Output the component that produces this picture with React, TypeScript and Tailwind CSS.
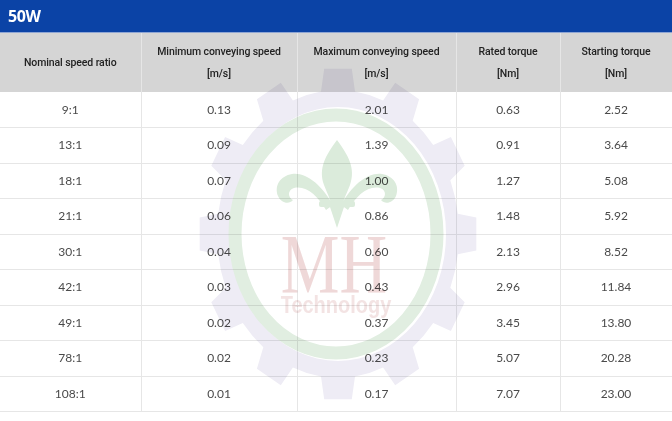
import React from 'react';

const rows = [
  ['9:1', '0.13', '2.01', '0.63', '2.52'],
  ['13:1', '0.09', '1.39', '0.91', '3.64'],
  ['18:1', '0.07', '1.00', '1.27', '5.08'],
  ['21:1', '0.06', '0.86', '1.48', '5.92'],
  ['30:1', '0.04', '0.60', '2.13', '8.52'],
  ['42:1', '0.03', '0.43', '2.96', '11.84'],
  ['49:1', '0.02', '0.37', '3.45', '13.80'],
  ['78:1', '0.02', '0.23', '5.07', '20.28'],
  ['108:1', '0.01', '0.17', '7.07', '23.00'],
];

const headers = [
  ['Nominal speed ratio'],
  ['Minimum conveying speed', '[m/s]'],
  ['Maximum conveying speed', '[m/s]'],
  ['Rated torque', '[Nm]'],
  ['Starting torque', '[Nm]'],
];

const widths = ['w-[141px]', 'w-[156px]', 'w-[159px]', 'w-[104px]', 'w-[112px]'];

// gear outline for the watermark, 12 teeth on an ellipse
const gearPath = () => {
  const cx = 338, cy = 234;
  const n = 12;
  const step = (Math.PI * 2) / n;
  const inner = [121, 144];
  const outer = [139, 166];
  const pts: string[] = [];
  const pt = (a: number, r: number[]) =>
    `${(cx + r[0] * Math.sin(a)).toFixed(1)},${(cy - r[1] * Math.cos(a)).toFixed(1)}`;
  for (let i = 0; i < n; i++) {
    const a = i * step;
    pts.push(pt(a - step * 0.27, inner));
    pts.push(pt(a - step * 0.19, outer));
    pts.push(pt(a + step * 0.19, outer));
    pts.push(pt(a + step * 0.27, inner));
    pts.push(pt(a + step * 0.5, inner));
  }
  const hx = 108, hy = 127;
  const hole = `M${cx - hx},${cy} a${hx},${hy} 0 1,0 ${hx * 2},0 a${hx},${hy} 0 1,0 ${-hx * 2},0 Z`;
  return `M${pts.join(' L')} Z ${hole}`;
};

const Watermark = () => (
  <svg
    className="pointer-events-none absolute left-0 top-0 mix-blend-multiply"
    width="672"
    height="421"
    viewBox="0 0 672 421"
  >
    <path d={gearPath()} fill="#eeecf5" fillRule="evenodd" />
    <ellipse cx="336" cy="234" rx="101" ry="119" fill="none" stroke="#e1eee1" strokeWidth="13" />
    {/* fleur-de-lis */}
    <g fill="#dbebdb">
      <path d="M337,140 C326,155 318,168 324,185 C327,193 330,198 331,204 L343,204 C344,198 347,193 350,185 C356,168 348,155 337,140 Z" />
      <path d="M333,205 C322,185 306,172 292,174 C280,176 274,186 278,196 C281,203 289,205 293,200 C288,198 287,190 294,188 C306,185 318,196 326,210 Z" />
      <path d="M341,205 C352,185 368,172 382,174 C394,176 400,186 396,196 C393,203 385,205 381,200 C386,198 387,190 380,188 C368,185 356,196 348,210 Z" />
      <rect x="319" y="201" width="36" height="6" rx="2" />
      <path d="M330,207 L337,228 L344,207 Z" />
    </g>
    <text
      x="0"
      y="0"
      textAnchor="middle"
      fontFamily="'Liberation Serif', serif"
      fontSize="66"
      fill="#efd8d8"
      transform="translate(334 293) scale(1 1.27)"
    >
      MH
    </text>
    <text
      x="0"
      y="0"
      textAnchor="middle"
      fontFamily="'Liberation Sans', sans-serif"
      fontSize="20"
      fontWeight="bold"
      fill="#f3e3e3"
      transform="translate(336 313) scale(1 1.2)"
    >
      Technology
    </text>
  </svg>
);

export default function App() {
  return (
    <div className="relative w-[672px] h-[421px] overflow-hidden bg-white font-['Roboto',sans-serif]">
      <div className="h-[33px] bg-[#0b43a6] border-b border-[#8fa6d4] flex items-center px-2">
        <span className="text-white text-[16px] font-bold font-['Open_Sans',sans-serif] tracking-tight">50W</span>
      </div>
      <table className="w-[672px] table-fixed border-collapse">
        <thead>
          <tr className="h-[59px] bg-[#d5d5d5]">
            {headers.map((h, i) => (
              <th
                key={i}
                className={`${widths[i]} border-x border-[#e6e6e6] first:border-l-0 text-[10.5px] font-medium text-[#222] leading-[22px] tracking-[-0.1px]`}
              >
                {h.map((line, j) => (
                  <div key={j}>{line}</div>
                ))}
              </th>
            ))}
          </tr>
        </thead>
        <tbody>
          {rows.map((r, i) => (
            <tr key={i} className="h-[35.5px] border-b border-[#e6e6e6]">
              {r.map((c, j) => (
                <td
                  key={j}
                  className="border-x border-[#e6e6e6] first:border-l-0 text-center text-[12px] text-[#4a4a4a] font-['Lato',sans-serif]"
                >
                  {c}
                </td>
              ))}
            </tr>
          ))}
        </tbody>
      </table>
      <Watermark />
    </div>
  );
}
